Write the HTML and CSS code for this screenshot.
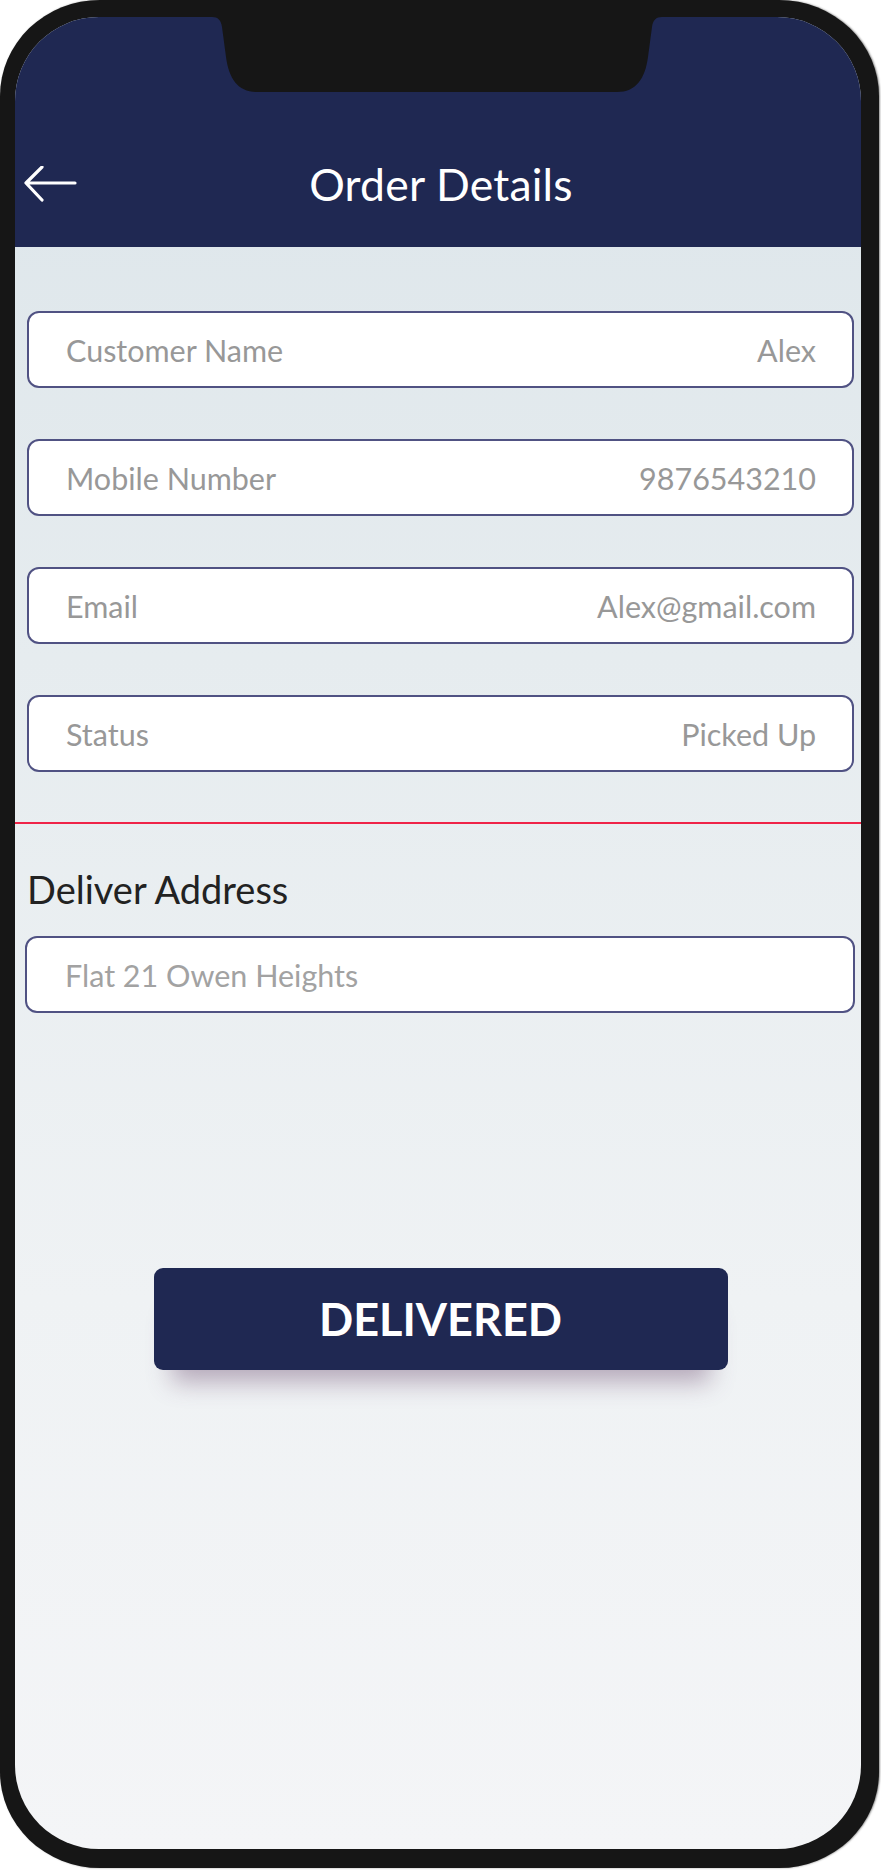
FILE: index.html
```html
<!DOCTYPE html>
<html>
<head>
<meta charset="utf-8">
<title>Order Details</title>
<link rel="stylesheet" href="styles.css">
</head>
<body>
<div class="phone">
  <div class="screen">
    <svg class="notch" width="450" height="76" viewBox="0 0 450 76">
      <path d="M0 0 H450 C444 0 441 3 440 10 L436 40 C433 62 424 75 405 75 H45 C26 75 17 62 14 40 L10 10 C9 3 6 0 0 0 Z" fill="#161616"/>
    </svg>
    <header class="header">
      <div class="header-row">
        <svg class="back" width="54" height="40" viewBox="0 0 54 40">
          <path d="M4 17 H52 M19 1 L3 17 L19 34" fill="none" stroke="#fff" stroke-width="3.2" stroke-linecap="round" stroke-linejoin="round"/>
        </svg>
        <h1 class="title">Order Details</h1>
        <span class="spacer"></span>
      </div>
    </header>
    <main class="content">
      <div class="fields">
        <div class="field"><span>Customer Name</span><span>Alex</span></div>
        <div class="field"><span>Mobile Number</span><span>9876543210</span></div>
        <div class="field"><span>Email</span><span>Alex@gmail.com</span></div>
        <div class="field"><span>Status</span><span>Picked Up</span></div>
      </div>
      <div class="divider"></div>
      <div class="address">
        <h2 class="address-title">Deliver Address</h2>
        <div class="field field-address"><span>Flat 21 Owen Heights</span></div>
      </div>
      <div class="action">
        <button class="btn">DELIVERED</button>
      </div>
    </main>
  </div>
</div>
</body>
</html>
```

FILE: styles.css
```css
html, body {
  margin: 0;
  padding: 0;
  background: #ffffff;
}
body {
  width: 881px;
  height: 1870px;
  font-family: Lato, "Open Sans", sans-serif;
}
.phone {
  box-sizing: border-box;
  width: 879px;
  height: 1868px;
  padding: 17px 18px 19px 15px;
  background: #161616;
  border-radius: 100px / 96px;
  box-shadow: 1px 0 2px rgba(0, 0, 0, 0.45);
}
.screen {
  position: relative;
  width: 846px;
  height: 1832px;
  border-radius: 84px;
  overflow: hidden;
  background: linear-gradient(180deg, #dce5ea 0%, #e6ecef 35%, #eff2f4 70%, #f4f5f7 100%);
}
.notch {
  position: absolute;
  top: 0;
  left: 197px;
  display: block;
}
.header {
  box-sizing: border-box;
  height: 230px;
  background: #1f2852;
  padding: 139px 0 0 8px;
}
.header-row {
  display: grid;
  grid-template-columns: 1fr auto 1fr;
  align-items: center;
  height: 60px;
}
.back {
  display: block;
}
.title {
  margin: 0;
  color: #ffffff;
  font-weight: 400;
  font-size: 44.5px;
  letter-spacing: 0.2px;
  position: relative;
  left: -1px;
  top: -3px;
}
.content {
  padding: 64px 7px 0 12px;
}
.fields {
  display: flex;
  flex-direction: column;
  gap: 51px;
}
.field {
  box-sizing: border-box;
  height: 77px;
  display: flex;
  align-items: center;
  justify-content: space-between;
  padding: 0 36px 0 37px;
  background: #ffffff;
  border: 2px solid #505283;
  border-radius: 12px;
  color: #989898;
  font-size: 30.5px;
}
.divider {
  height: 2px;
  background: #ef2448;
  margin: 50px -7px 0 -12px;
}
.address {
  padding-top: 42px;
}
.address-title {
  margin: 0 0 24px 0;
  font-weight: 400;
  font-size: 38px;
  color: #222222;
  line-height: 46px;
}
.field-address {
  margin-left: -2px;
  margin-right: -1px;
  padding-left: 38px;
  color: #a2a2a2;
}
.action {
  display: flex;
  justify-content: center;
  padding: 255px 0 0 0;
}
.btn {
  width: 574px;
  height: 102px;
  border: none;
  border-radius: 9px;
  background: #1f2852;
  color: #ffffff;
  font-family: Lato, "Open Sans", sans-serif;
  font-weight: 700;
  font-size: 45px;
  box-shadow: 0 30px 24px -18px rgba(110, 80, 115, 0.45);
}
```
